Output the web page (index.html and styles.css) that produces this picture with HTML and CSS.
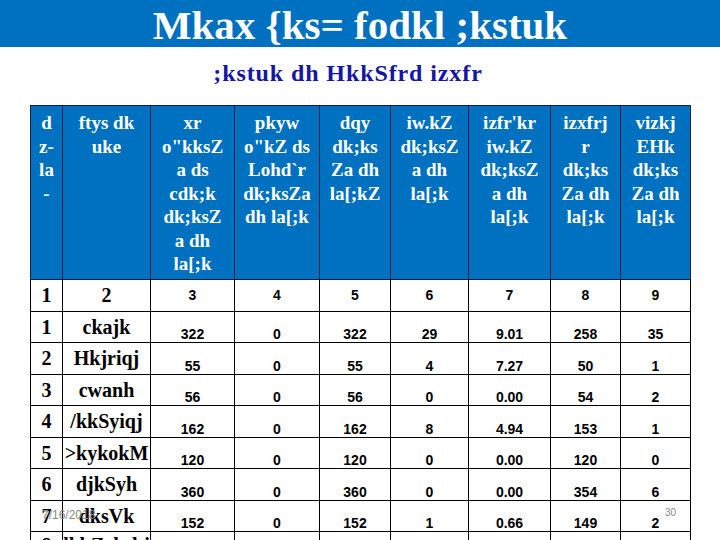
FILE: index.html
```html
<!DOCTYPE html>
<html>
<head>
<meta charset="utf-8">
<link rel="stylesheet" href="styles.css">
</head>
<body>
<div class="slide">
  <header class="titlebar">Mkax {ks= fodkl ;kstuk</header>
  <h2 class="subtitle">;kstuk dh HkkSfrd izxfr</h2>
  <table class="grid">
    <colgroup>
      <col style="width:32px"><col style="width:88px"><col style="width:84px"><col style="width:85px"><col style="width:71px"><col style="width:78px"><col style="width:82px"><col style="width:70px"><col style="width:70px">
    </colgroup>
    <thead>
      <tr class="head">
        <th>d<br>z-<br>la<br>-</th>
        <th>ftys dk<br>uke</th>
        <th>xr<br>o"kksZ<br>a ds<br>cdk;k<br>dk;ksZ<br>a dh<br>la[;k</th>
        <th>pkyw<br>o"kZ ds<br>Lohd`r<br>dk;ksZa<br>dh la[;k</th>
        <th>dqy<br>dk;ks<br>Za dh<br>la[;kZ</th>
        <th>iw.kZ<br>dk;ksZ<br>a dh<br>la[;k</th>
        <th>izfr'kr<br>iw.kZ<br>dk;ksZ<br>a dh<br>la[;k</th>
        <th>izxfrj<br>r<br>dk;ks<br>Za dh<br>la[;k</th>
        <th>vizkj<br>EHk<br>dk;ks<br>Za dh<br>la[;k</th>
      </tr>
    </thead>
    <tbody>
      <tr class="idx">
        <td class="sn">1</td><td class="name">2</td><td class="num">3</td><td class="num">4</td><td class="num">5</td><td class="num">6</td><td class="num">7</td><td class="num">8</td><td class="num">9</td>
      </tr>
      <tr>
        <td class="sn">1</td><td class="name">ckajk</td><td class="num">322</td><td class="num">0</td><td class="num">322</td><td class="num">29</td><td class="num">9.01</td><td class="num">258</td><td class="num">35</td>
      </tr>
      <tr>
        <td class="sn">2</td><td class="name">Hkjriqj</td><td class="num">55</td><td class="num">0</td><td class="num">55</td><td class="num">4</td><td class="num">7.27</td><td class="num">50</td><td class="num">1</td>
      </tr>
      <tr>
        <td class="sn">3</td><td class="name">cwanh</td><td class="num">56</td><td class="num">0</td><td class="num">56</td><td class="num">0</td><td class="num">0.00</td><td class="num">54</td><td class="num">2</td>
      </tr>
      <tr>
        <td class="sn">4</td><td class="name">/kkSyiqj</td><td class="num">162</td><td class="num">0</td><td class="num">162</td><td class="num">8</td><td class="num">4.94</td><td class="num">153</td><td class="num">1</td>
      </tr>
      <tr>
        <td class="sn">5</td><td class="name">&gt;kykokM</td><td class="num">120</td><td class="num">0</td><td class="num">120</td><td class="num">0</td><td class="num">0.00</td><td class="num">120</td><td class="num">0</td>
      </tr>
      <tr>
        <td class="sn">6</td><td class="name">djkSyh</td><td class="num">360</td><td class="num">0</td><td class="num">360</td><td class="num">0</td><td class="num">0.00</td><td class="num">354</td><td class="num">6</td>
      </tr>
      <tr>
        <td class="sn">7</td><td class="name">dksVk</td><td class="num">152</td><td class="num">0</td><td class="num">152</td><td class="num">1</td><td class="num">0.66</td><td class="num">149</td><td class="num">2</td>
      </tr>
      <tr class="cut">
        <td class="sn">8</td><td class="name">lkbZekskj</td><td class="num"></td><td class="num"></td><td class="num"></td><td class="num"></td><td class="num"></td><td class="num"></td><td class="num"></td>
      </tr>
    </tbody>
  </table>
  <div class="date">7/16/2018</div>
  <div class="pageno">30</div>
</div>
</body>
</html>
```
FILE: styles.css
```css
html, body {
  margin: 0;
  padding: 0;
  background: #ffffff;
}
.slide {
  position: relative;
  width: 720px;
  height: 540px;
  overflow: hidden;
  background: #ffffff;
}
.titlebar {
  height: 44px;
  padding-top: 3px;
  background: #0070c0;
  color: #ffffff;
  font-family: "Liberation Serif", "Times New Roman", serif;
  font-weight: bold;
  font-size: 41px;
  line-height: 44px;
  text-align: center;
}
.subtitle {
  margin: 0;
  padding: 12px 24px 0 0;
  height: 28px;
  font-family: "Liberation Serif", "Times New Roman", serif;
  font-weight: bold;
  font-size: 24px;
  line-height: 28px;
  letter-spacing: 0.9px;
  color: #1515a8;
  text-align: center;
}
.grid {
  margin: 18px 0 0 30px;
  width: 660px;
  table-layout: fixed;
  border-collapse: collapse;
}
.grid th, .grid td {
  padding: 0;
  text-align: center;
  white-space: nowrap;
  overflow: hidden;
}
.head th {
  height: 168px;
  vertical-align: top;
  padding-top: 5px;
  background: #0070c0;
  color: #ffffff;
  border: 1px solid #14203f;
  font-family: "Liberation Serif", "Times New Roman", serif;
  font-weight: bold;
  font-size: 19px;
  line-height: 23.5px;
}
.grid td {
  border: 1px solid #000000;
  height: 30.5px;
  color: #000000;
}
.sn, .name {
  font-family: "Liberation Serif", "Times New Roman", serif;
  font-weight: bold;
  font-size: 20px;
  line-height: 22px;
  vertical-align: middle;
}
.num {
  font-family: "Liberation Sans", Arial, sans-serif;
  font-weight: bold;
  font-size: 14px;
  line-height: 16px;
  vertical-align: bottom;
}
.idx .num {
  vertical-align: middle;
}
.cut td {
  vertical-align: top;
  padding-top: 2px;
}
.date {
  position: absolute;
  left: 42px;
  top: 508px;
  font-family: "Liberation Sans", Arial, sans-serif;
  font-size: 12px;
  color: #8a8a8a;
}
.pageno {
  position: absolute;
  left: 665px;
  top: 507px;
  font-family: "Liberation Sans", Arial, sans-serif;
  font-size: 10px;
  color: #8a8a8a;
}
```
